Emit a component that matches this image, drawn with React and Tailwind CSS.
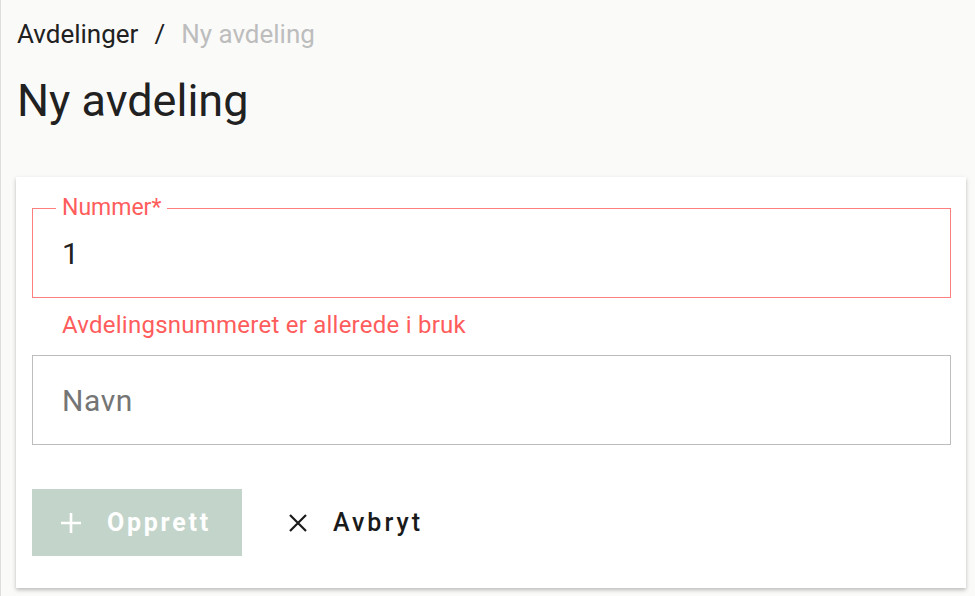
import React from "react";

export default function App() {
  return (
    <div className="min-h-[596px] w-[975px] bg-[#fafaf9] border-l border-[#dddddd] font-['Roboto',sans-serif] text-[#202020]">
      <div className="px-[16px] pt-[18px]">
        <div className="flex items-center text-[26px] leading-[32px]">
          <span className="text-[#212121]">Avdelinger</span>
          <span className="mx-[16px] text-[#212121]">/</span>
          <span className="text-[#bdbdbd]">Ny avdeling</span>
        </div>
        <h1 className="mt-[23px] text-[45px] leading-[56px] text-[#212121]">Ny avdeling</h1>
      </div>
      <div className="ml-[15px] mt-[48px] w-[950px] bg-white shadow-[0_2px_4px_rgba(0,0,0,0.25)] pl-[16px] pr-[15px] pt-[31px] pb-[32px]">
        <div className="relative h-[90px] border border-[#ff7e7e] flex items-center px-[29px]">
          <span className="absolute left-[23px] top-[-15px] bg-white px-[6px] text-[23px] leading-[28px] text-[#ff5c5c]">Nummer*</span>
          <span className="text-[30px] text-[#212121]">1</span>
        </div>
        <div className="pl-[30px] pt-[13px] h-[57px] text-[24px] leading-[28px] tracking-[0.01em] text-[#ff5c5c]">Avdelingsnummeret er allerede i bruk</div>
        <div className="h-[90px] border border-[#bdbdbd] flex items-center px-[29px]">
          <span className="text-[30px] tracking-[0.02em] text-[#757575]">Navn</span>
        </div>
        <div className="mt-[44px] flex items-center">
          <div className="flex items-center h-[67px] w-[210px] bg-[#c3d4ca] pl-[29px] text-white">
            <svg width="20" height="20" viewBox="0 0 20 20" className="mr-[26px]">
              <path d="M10 0v20M0 10h20" stroke="white" strokeWidth="2.6" />
            </svg>
            <span className="text-[25px] font-bold tracking-[0.11em]">Opprett</span>
          </div>
          <div className="flex items-center ml-[46px] text-[#1a1a1a]">
            <svg width="20" height="20" viewBox="0 0 20 20" className="mr-[25px]">
              <path d="M2 2l16 16M18 2L2 18" stroke="#1a1a1a" strokeWidth="2.2" />
            </svg>
            <span className="text-[25px] font-medium tracking-[0.12em]">Avbryt</span>
          </div>
        </div>
      </div>
    </div>
  );
}
